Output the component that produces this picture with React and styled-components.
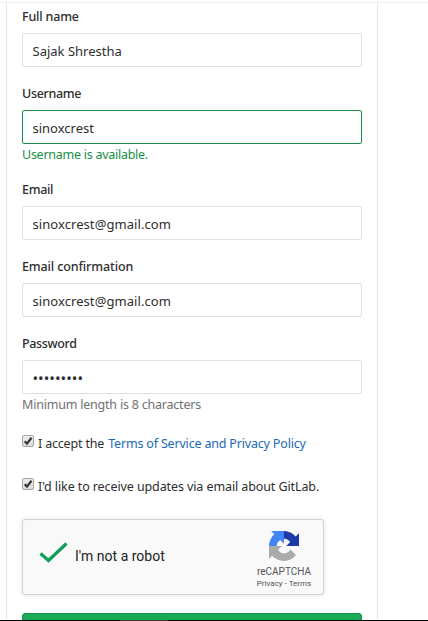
import React from 'react';
import styled, { createGlobalStyle } from 'styled-components';

const GlobalStyle = createGlobalStyle`
  * { box-sizing: border-box; }
  body {
    margin: 0;
    background: #fff;
    color: #2e2e2e;
    font-family: "Noto Sans", "Open Sans", sans-serif;
    font-size: 12.5px;
  }
`;

const Page = styled.div`
  height: 621px;
  padding-top: 2px;
  overflow: hidden;
  display: flex;
  flex-direction: column;
`;

const Panel = styled.main`
  flex: 1;
  min-height: 0;
  overflow: hidden;
  border-top: 1px solid #eee;
`;

const Form = styled.form`
  width: 372px;
  height: 640px;
  margin-left: 6px;
  padding: 0 15px;
  border: solid #e5e5e5;
  border-width: 0 1px;
`;

const Field = styled.div`
  margin-bottom: 13px;
`;

const Label = styled.label`
  display: block;
  height: 30px;
  line-height: 28px;
  font-weight: 500;
  letter-spacing: ${(p) => p.$spacing}px;
`;

const Input = styled.input`
  display: block;
  width: 340px;
  height: 34px;
  padding: 2px 9.5px 0;
  border: 1px solid ${(p) => (p.$valid ? '#168f48' : '#dfdfdf')};
  border-radius: 2px;
  outline: none;
  background: #fff;
  color: #2e2e2e;
  font: ${(p) => p.$size || 13}px "Noto Sans", "Open Sans", sans-serif;
  letter-spacing: ${(p) => p.$spacing || 0}px;
`;

const Hint = styled.p`
  height: 19px;
  margin: 0;
  line-height: 21px;
  color: ${(p) => (p.$valid ? '#168f48' : '#707070')};
  letter-spacing: ${(p) => p.$spacing}px;
`;

const CheckRow = styled.label`
  display: flex;
  align-items: flex-start;
  height: 24px;
  margin-bottom: 19px;
  line-height: 25px;
  white-space: pre;
  letter-spacing: ${(p) => p.$spacing}px;
`;

const Checks = styled.div`
  padding-top: 5px;
`;

const CheckBox = styled.span`
  display: flex;
  width: 12px;
  height: 12px;
  margin: 4px 4px 0 0;
  border: 1px solid #a5a5a5;
  border-radius: 2px;
  background: linear-gradient(#ededed, #dcdcdc);
`;

const Link = styled.a`
  margin-left: 1px;
  color: #1b69b6;
`;

const Captcha = styled.div`
  display: flex;
  width: 302px;
  height: 76px;
  margin-top: 21px;
  padding-left: 16px;
  border: 1px solid #d3d3d3;
  border-radius: 3px;
  background: #f9f9f9;
  box-shadow: 0 0 4px 1px rgba(0, 0, 0, 0.08);
  font-family: Roboto, sans-serif;
`;

const Tick = styled.svg`
  width: 30px;
  height: 24px;
  margin-top: 21px;
`;

const CaptchaText = styled.span`
  flex: 1;
  padding-left: 6px;
  color: #222;
  font-size: 14px;
  line-height: 72px;
`;

const Brand = styled.div`
  display: flex;
  flex-direction: column;
  align-items: center;
  width: 56px;
  margin-right: 11px;
  padding-top: 11px;
  color: #555;
`;

const BrandName = styled.span`
  margin-top: 4px;
  font-size: 10px;
  line-height: 13px;
`;

const BrandLinks = styled.span`
  font-size: 8px;
  line-height: 12px;
  white-space: nowrap;
`;

const Submit = styled.button`
  display: block;
  width: 340px;
  height: 36px;
  margin-top: 18px;
  border: 1px solid #168f48;
  border-radius: 3px;
  background: #1aaa55;
`;

const BottomEdge = styled.div`
  height: 1px;
  background: linear-gradient(90deg, #000 120px, #3a3a3a 120px, #3a3a3a 168px, #000 168px);
`;

function Checked() {
  return (
    <CheckBox>
      <svg width="10" height="10" viewBox="0 0 10 10">
        <path d="M1.7 5.2 4 7.6 8.5 1.8" fill="none" stroke="#383838" strokeWidth="2.3" />
      </svg>
    </CheckBox>
  );
}

function RecaptchaLogo() {
  return (
    <svg width="30" height="30" viewBox="0 0 64 64">
      <path fill="#1c3aa9" d="M64 31.955l-.033-1.37V4.687l-7.16 7.16C50.948 4.674 42.033.093 32.05.093c-10.4 0-19.622 4.96-25.458 12.64l11.736 11.86a15.55 15.55 0 0 1 4.754-5.334c2.05-1.6 4.952-2.906 8.968-2.906.485 0 .86.057 1.135.163 4.976.393 9.288 3.14 11.828 7.124l-8.307 8.307L64 31.953" />
      <path fill="#4285f4" d="M31.862.094l-1.37.033H4.594l7.16 7.16C4.58 13.147 0 22.06 0 32.046c0 10.4 4.96 19.622 12.64 25.458L24.5 45.768a15.55 15.55 0 0 1-5.334-4.754c-1.6-2.05-2.906-4.952-2.906-8.968 0-.485.057-.86.163-1.135.393-4.976 3.14-9.288 7.124-11.828l8.307 8.307L31.86.095" />
      <path fill="#ababab" d="M.001 32.045l.033 1.37v25.898l7.16-7.16c5.86 7.173 14.774 11.754 24.76 11.754 10.4 0 19.622-4.96 25.458-12.64l-11.736-11.86a15.55 15.55 0 0 1-4.754 5.334c-2.05 1.6-4.952 2.906-8.968 2.906-.485 0-.86-.057-1.135-.163-4.976-.393-9.288-3.14-11.828-7.124l8.307-8.307c-10.522.04-22.4.066-27.295-.005" />
    </svg>
  );
}

export default function App() {
  return (
    <Page>
      <GlobalStyle />
      <Panel>
        <Form>
          <Field>
            <Label $spacing={-0.18}>Full name</Label>
            <Input readOnly value="Sajak Shrestha" />
          </Field>
          <Field>
            <Label $spacing={-0.32}>Username</Label>
            <Input readOnly $valid value="sinoxcrest" />
            <Hint $valid $spacing={-0.26}>Username is available.</Hint>
          </Field>
          <Field>
            <Label $spacing={-0.32}>Email</Label>
            <Input readOnly value="sinoxcrest@gmail.com" $spacing={0.07} />
          </Field>
          <Field>
            <Label $spacing={-0.12}>Email confirmation</Label>
            <Input readOnly value="sinoxcrest@gmail.com" $spacing={0.07} />
          </Field>
          <Field>
            <Label $spacing={-0.34}>Password</Label>
            <Input readOnly value="•••••••••" $size={15} $spacing={-0.03} />
            <Hint $spacing={-0.21}>Minimum length is 8 characters</Hint>
          </Field>
          <Checks>
            <CheckRow $spacing={-0.18}>
              <Checked />
              <span>I accept the </span>
              <Link>Terms of Service and Privacy Policy</Link>
            </CheckRow>
            <CheckRow $spacing={-0.1}>
              <Checked />
              <span>I'd like to receive updates via email about GitLab.</span>
            </CheckRow>
          </Checks>
          <Captcha>
            <Tick viewBox="0 0 30 24">
              <path d="M1.5 12.5 9.5 19.5 27.5 2.5" fill="none" stroke="#0f9d58" strokeWidth="3.2" />
            </Tick>
            <CaptchaText>I'm not a robot</CaptchaText>
            <Brand>
              <RecaptchaLogo />
              <BrandName>reCAPTCHA</BrandName>
              <BrandLinks>Privacy - Terms</BrandLinks>
            </Brand>
          </Captcha>
          <Submit type="button" aria-label="Register" />
        </Form>
      </Panel>
      <BottomEdge />
    </Page>
  );
}
